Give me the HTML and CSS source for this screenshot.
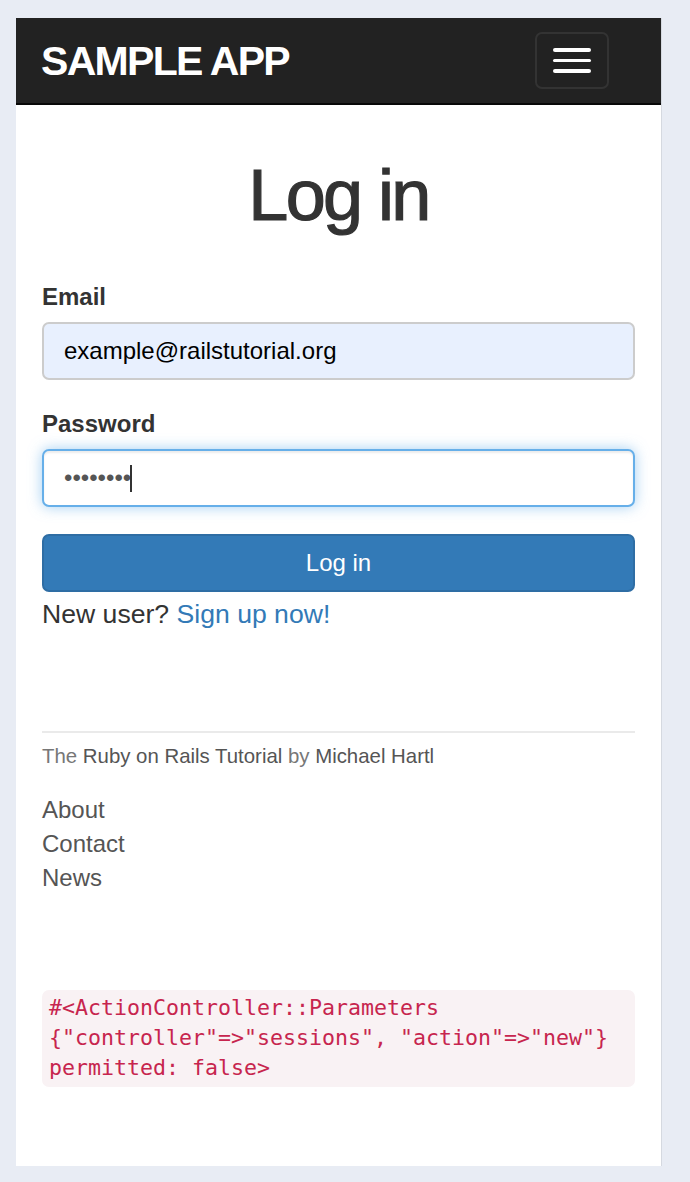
FILE: index.html
```html
<!DOCTYPE html>
<html lang="en">
<head>
  <meta charset="UTF-8" />
  <meta name="viewport" content="width=device-width, initial-scale=1.0" />
  <title>Log in | Ruby on Rails Tutorial Sample App</title>
  <link rel="stylesheet" href="styles.css">
</head>
<body>
  <div class="window">
    <header class="navbar">
      <a href="#" id="logo">sample app</a>
      <button type="button" class="navbar-toggle" aria-label="Toggle navigation">
        <span class="icon-bar"></span>
        <span class="icon-bar"></span>
        <span class="icon-bar"></span>
      </button>
    </header>

    <div class="container">
      <h1>Log in</h1>

      <form class="login-form" action="#" method="post">
        <label for="session_email">Email</label>
        <input id="session_email" class="form-control autofilled" type="email" value="example@railstutorial.org" />

        <label for="session_password">Password</label>
        <div class="field-wrap">
          <input id="session_password" class="form-control focused" type="password" value="password" />
          <span class="caret"></span>
        </div>

        <button type="submit" class="btn-primary">Log in</button>
      </form>
      <p class="signup">New user? <a href="#">Sign up now!</a></p>

      <!-- Footer -->
      <footer class="footer">
        <small>The <a href="#">Ruby on Rails Tutorial</a> by <a href="#">Michael Hartl</a></small>
        <nav>
          <ul>
            <li><a href="#">About</a></li>
            <li><a href="#">Contact</a></li>
            <li><a href="#">News</a></li>
          </ul>
        </nav>
      </footer>

      <pre class="debug-dump">#&lt;ActionController::Parameters {"controller"=&gt;"sessions", "action"=&gt;"new"} permitted: false&gt;</pre>
    </div>
  </div>
</body>
</html>
```

FILE: styles.css
```css
:root {
  --page-bg: #e8ecf4;
  --text: #333;
  --link: #337ab7;
  --nav-bg: #222;
}
*, *::before, *::after { box-sizing: border-box; }
html, body { margin: 0; padding: 0; }
body {
  background: var(--page-bg); color: var(--text);
  font-family: "Liberation Sans", Arial, Helvetica, sans-serif;
  font-size: 24px; line-height: 34.4px; overflow: hidden;
}
a { color: var(--link); text-decoration: none; }

.window {
  width: 646px; min-height: 1148px; margin: 18px 0 0 16px;
  background: #fff; border-right: 1px solid #d5d9e0;
}

/* Navbar */
.navbar {
  display: flex; justify-content: space-between; align-items: flex-start;
  height: 87px; padding: 0 52px 0 25px;
  background: var(--nav-bg); border-bottom: 2px solid #080808;
}
#logo {
  margin-top: 23px;
  font-size: 41px; line-height: 41px; font-weight: bold;
  letter-spacing: -1.7px; text-transform: uppercase; color: #fff;
}
.navbar-toggle {
  display: flex; flex-direction: column; align-items: center; justify-content: center; gap: 7px;
  width: 74px; height: 57px; margin-top: 14px; padding: 0;
  background: transparent; border: 2px solid #333; border-radius: 7px; cursor: pointer;
}
.icon-bar { display: block; width: 38px; height: 3.4px; background: #fff; border-radius: 2px; }

/* Content */
.container { padding: 0 26px; }
h1 {
  margin: 50px 0 45px; text-align: center;
  font-size: 72px; line-height: 80px; font-weight: 500; letter-spacing: -2.6px;
  -webkit-text-stroke: 1.2px #333;
}

.login-form label { display: block; margin-bottom: 8px; font-weight: bold; line-height: 34px; }
.form-control {
  display: block; width: 100%; height: 58px; margin: 0 0 27px; padding: 0 20px;
  font: inherit; color: #555; background: #fff;
  border: 2px solid #ccc; border-radius: 7px;
}
.form-control.autofilled { background: #e8f0fe; color: #000; }
.form-control.focused {
  border-color: #66afe9; outline: none;
  box-shadow: inset 0 2px 2px rgba(0,0,0,0.075), 0 0 14px rgba(102,175,233,0.6);
}
.field-wrap { position: relative; }
.caret {
  position: absolute; left: 88px; top: 16px;
  width: 2px; height: 27px; background: #333;
}

.btn-primary {
  display: block; width: 100%; height: 58px; padding: 0;
  font: inherit; color: #fff; background: var(--link);
  border: 2px solid #2e6da4; border-radius: 7px; cursor: pointer;
}
.signup { margin: 5px 0 0; font-size: 26.6px; line-height: 34px; }

/* Footer */
.footer { margin-top: 100px; padding-top: 6px; border-top: 2px solid #eaeaea; color: #777; }
.footer small { display: block; font-size: 20.4px; line-height: 34px; }
.footer a { color: #555; }
.footer ul { list-style: none; margin: 19.5px 0 0; padding: 0; }

.debug-dump {
  margin: 94px 0 0; padding: 3.4px 7px;
  font-family: "DejaVu Sans Mono", "Liberation Mono", monospace;
  font-size: 21.6px; line-height: 30px;
  color: #c7254e; background: #f9f2f4; border-radius: 7px;
  white-space: pre-wrap;
}
```
